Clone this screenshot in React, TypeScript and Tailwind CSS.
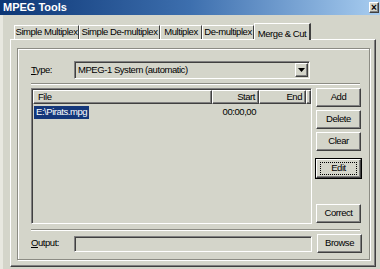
const raised =
  "border border-t-white border-l-white border-r-[#404040] border-b-[#404040] shadow-[inset_-1px_-1px_0_#808080]";
const sunken =
  "border border-t-[#808080] border-l-[#808080] border-r-white border-b-white shadow-[inset_1px_1px_0_#404040]";

const Btn = ({ label, def = false, className = "" }: { label: string; def?: boolean; className?: string }) => (
  <div
    className={`${className} w-[45px] h-[19px] bg-[#d4d5ca] flex items-center justify-center ${
      def ? "outline outline-1 outline-black" : ""
    } ${raised}`}
  >
    {def ? (
      <span className="border border-dotted border-black w-[37px] h-[13px] flex items-center justify-center">{label}</span>
    ) : (
      <span>{label}</span>
    )}
  </div>
);

const Etched = ({ className = "" }: { className?: string }) => (
  <div className={`${className} h-[2px] border-t border-t-[#8c8c84] border-b border-b-white`} />
);

const tabs = [
  { label: "Simple Multiplex", w: "w-[65px]" },
  { label: "Simple De-multiplex", w: "w-[81px]" },
  { label: "Multiplex", w: "w-[42px]" },
  { label: "De-multiplex", w: "w-[52px]" },
];

export default function App() {
  return (
    <div
      className="w-[380px] h-[269px] overflow-hidden bg-[#d4d5ca] text-black text-[9.5px] tracking-[-0.45px] flex flex-col"
      style={{ fontFamily: '"Liberation Sans", Arial, sans-serif' }}
    >
      {/* title bar */}
      <div className="h-[15px] shrink-0 flex items-center pl-[3px] pr-[1px] bg-gradient-to-r from-[#0c3675] via-[#3d6fae] to-[#a8cdf0]">
        <span className="text-white font-bold text-[11px] tracking-normal">MPEG Tools</span>
        <div className={`ml-auto w-[10px] h-[11px] bg-[#d4d5ca] flex items-center justify-center text-[10px] font-bold leading-none tracking-normal ${raised}`}>
          ×
        </div>
      </div>

      {/* window body */}
      <div className="flex-1 border-l-[3px] border-l-[#e8e8e0] pl-[7px] pt-[8px]">
        {/* tab strip */}
        <div className="flex items-end h-[16px] pl-[4px]">
          {tabs.map((t) => (
            <div
              key={t.label}
              className={`${t.w} h-[14px] flex items-center justify-center border-t border-t-white border-l border-l-white border-r border-r-[#404040] whitespace-nowrap`}
            >
              {t.label}
            </div>
          ))}
          <div className="w-[57px] h-[17px] flex items-start pt-[3px] justify-center border-t border-t-white border-l border-l-white border-r-2 border-r-[#404040] whitespace-nowrap bg-[#d4d5ca] relative z-10 -mb-[1px]">
            Merge &amp; Cut
          </div>
        </div>

        {/* tab panel */}
        <div className="w-[366px] h-[228px] border border-t-white border-l-white border-r-[#404040] border-b-[#404040] shadow-[inset_-1px_-1px_0_#808080]">
          {/* group box */}
          <div className="ml-[6px] mt-[8px] w-[353px] h-[212px] border border-[#8c8c84] shadow-[1px_1px_0_#fff,inset_1px_1px_0_#fff] pl-[13px] pt-[12px]">
            {/* type row */}
            <div className="flex items-center h-[18px]">
              <span className="w-[43px]">
                <span className="underline">T</span>ype:
              </span>
              <div className={`w-[236px] h-[18px] bg-[#d4d5ca] flex items-center pl-[3px] pr-[1px] ${sunken}`}>
                <span className="flex-1">MPEG-1 System (automatic)</span>
                <div className={`w-[13px] h-[14px] bg-[#d4d5ca] flex items-center justify-center ${raised}`}>
                  <svg width="7" height="4" viewBox="0 0 7 4">
                    <path d="M0 0h7L3.5 4z" fill="#000" />
                  </svg>
                </div>
              </div>
            </div>

            <Etched className="mt-[4px] w-[329px]" />

            {/* list + buttons */}
            <div className="flex mt-[3px]">
              <div className={`w-[281px] h-[136px] bg-[#d4d5ca] ${sunken} pl-[1px] pt-[1px]`}>
                <div className="flex h-[14px]">
                  <div className={`w-[179px] h-full pl-[4px] flex items-center ${raised}`}>File</div>
                  <div className={`w-[47px] h-full pr-[3px] flex items-center justify-end ${raised}`}>Start</div>
                  <div className={`w-[47px] h-full pr-[3px] flex items-center justify-end ${raised}`}>End</div>
                  <div className={`flex-1 h-full ${raised}`} />
                </div>
                <div className="flex h-[13px] mt-[2px] items-center">
                  <div className="w-[179px] pl-[1px]">
                    <span className="bg-[#14377a] text-white px-[2px] h-[13px] inline-flex items-center">E:\Pirats.mpg</span>
                  </div>
                  <div className="w-[47px] text-right pr-[3px]">00:00,00</div>
                </div>
              </div>
              <div className="ml-[4px] flex flex-col">
                <Btn label="Add" />
                <Btn label="Delete" className="mt-[3px]" />
                <Btn label="Clear" className="mt-[3px]" />
                <Btn label="Edit" def className="mt-[8px]" />
                <Btn label="Correct" className="mt-[26px]" />
              </div>
            </div>

            <Etched className="mt-[5px] w-[329px]" />

            {/* output row */}
            <div className="flex items-center mt-[3px] h-[19px]">
              <span className="w-[43px]">
                <span className="underline">O</span>utput:
              </span>
              <div className={`w-[238px] h-[16px] bg-[#d4d5ca] ${sunken}`} />
              <Btn label="Browse" className="ml-[5px]" />
            </div>
          </div>
        </div>
      </div>
    </div>
  );
}
